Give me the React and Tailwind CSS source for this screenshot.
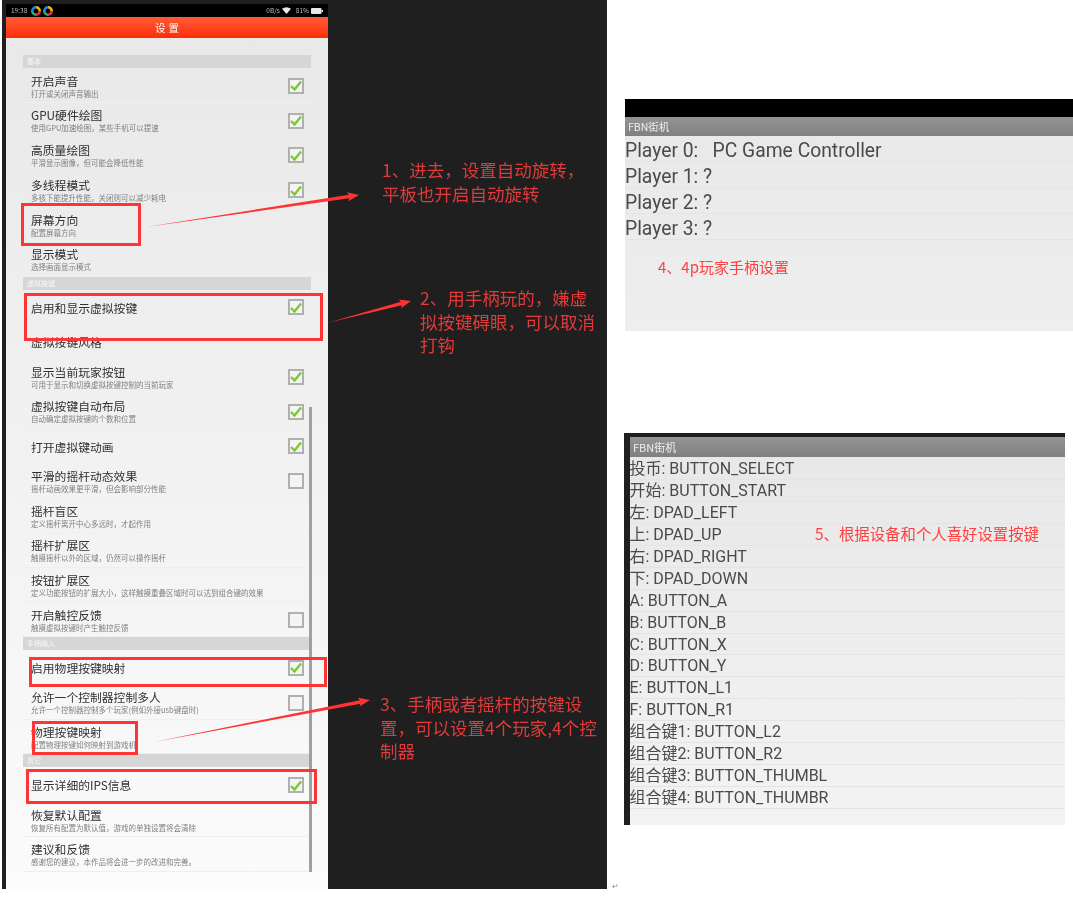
import React from 'react';

const sections = [
  {
    title: '基本',
    rows: [
      { title: '开启声音', sub: '打开或关闭声音输出', check: true },
      { title: 'GPU硬件绘图', sub: '使用GPU加速绘图，某些手机可以提速', check: true },
      { title: '高质量绘图', sub: '平滑显示图像，但可能会降低性能', check: true },
      { title: '多线程模式', sub: '多核下能提升性能，关闭则可以减少耗电', check: true },
      { title: '屏幕方向', sub: '配置屏幕方向' },
      { title: '显示模式', sub: '选择画面显示模式' },
    ],
  },
  {
    title: '虚拟按键',
    rows: [
      { title: '启用和显示虚拟按键', check: true },
      { title: '虚拟按键风格' },
      { title: '显示当前玩家按钮', sub: '可用于显示和切换虚拟按键控制的当前玩家', check: true },
      { title: '虚拟按键自动布局', sub: '自动确定虚拟按键的个数和位置', check: true },
      { title: '打开虚拟键动画', check: true },
      { title: '平滑的摇杆动态效果', sub: '摇杆动画效果更平滑，但会影响部分性能', check: false },
      { title: '摇杆盲区', sub: '定义摇杆离开中心多远时，才起作用' },
      { title: '摇杆扩展区', sub: '触摸摇杆以外的区域，仍然可以操作摇杆' },
      { title: '按钮扩展区', sub: '定义功能按钮的扩展大小，这样触摸重叠区域时可以达到组合键的效果' },
      { title: '开启触控反馈', sub: '触摸虚拟按键时产生触控反馈', check: false },
    ],
  },
  {
    title: '手柄输入',
    rows: [
      { title: '启用物理按键映射', check: true },
      { title: '允许一个控制器控制多人', sub: '允许一个控制器控制多个玩家(例如外接usb键盘时)', check: false },
      { title: '物理按键映射', sub: '配置物理按键如何映射到游戏机' },
    ],
  },
  {
    title: '其它',
    rows: [
      { title: '显示详细的IPS信息', check: true },
      { title: '恢复默认配置', sub: '恢复所有配置为默认值，游戏的单独设置将会清除' },
      { title: '建议和反馈', sub: '感谢您的建议，本作品将会进一步的改进和完善。' },
    ],
  },
];

const players = ['Player 0:   PC Game Controller', 'Player 1: ?', 'Player 2: ?', 'Player 3: ?'];

const mappings = [
  '投币: BUTTON_SELECT',
  '开始: BUTTON_START',
  '左: DPAD_LEFT',
  '上: DPAD_UP',
  '右: DPAD_RIGHT',
  '下: DPAD_DOWN',
  'A: BUTTON_A',
  'B: BUTTON_B',
  'C: BUTTON_X',
  'D: BUTTON_Y',
  'E: BUTTON_L1',
  'F: BUTTON_R1',
  '组合键1: BUTTON_L2',
  '组合键2: BUTTON_R2',
  '组合键3: BUTTON_THUMBL',
  '组合键4: BUTTON_THUMBR',
];

const font = { fontFamily: '"Noto Sans CJK SC", sans-serif' };

const Checkbox = ({ checked }) => (
  <div className="w-[16px] h-[16px] mt-[2px] shrink-0 border-2 border-[#b0b0b0] bg-[#f4f4f4] flex items-center justify-center">
    {checked && (
      <svg width="12" height="11" viewBox="0 0 12 11">
        <path d="M1 6 L4.5 9.5 L11 1.5" fill="none" stroke="#7cc832" strokeWidth="2.4" />
      </svg>
    )}
  </div>
);

const Row = ({ title, sub, check }) => (
  <div className="h-[34.75px] flex items-center justify-between pl-[8px] pr-[7px] border-b border-[#efefef]">
    <div className="flex flex-col min-w-0 pt-[2.5px]">
      <span className="text-[11.8px] leading-[14px] text-[#303030] whitespace-nowrap">{title}</span>
      {sub && <span className="text-[7.5px] leading-[10px] mt-px text-[#808080] whitespace-nowrap">{sub}</span>}
    </div>
    {check !== undefined && <Checkbox checked={check} />}
  </div>
);

const Ring = () => (
  <svg width="10" height="10" viewBox="0 0 10 10" fill="none" strokeWidth="2.6">
    <path d="M5 1.3 A3.7 3.7 0 0 1 8.7 5" stroke="#f5b800" />
    <path d="M8.7 5 A3.7 3.7 0 0 1 5 8.7" stroke="#e0304a" />
    <path d="M5 8.7 A3.7 3.7 0 0 1 1.3 5" stroke="#21b36b" />
    <path d="M1.3 5 A3.7 3.7 0 0 1 5 1.3" stroke="#1e88e5" />
  </svg>
);

const StatusBar = () => (
  <div className="h-[13px] bg-black flex items-center justify-between pl-[4px] pr-[5px] text-[6.5px] text-[#bdbdbd]">
    <div className="flex items-center">
      <span className="mr-[4px] ml-[1px]">19:38</span>
      <Ring />
      <span className="w-[2px]" />
      <Ring />
    </div>
    <div className="flex items-center">
      <span>0B/s</span>
      <svg className="mx-[2px]" width="9" height="7" viewBox="0 0 9 7">
        <path d="M0 1.8 Q4.5 -1.2 9 1.8 L4.5 7 Z" fill="#e8e8e8" />
      </svg>
      <span className="ml-[3px]">81%</span>
      <svg className="ml-[2px]" width="12" height="6" viewBox="0 0 12 6">
        <rect x="0" y="0" width="10.5" height="6" rx="1" fill="#e8e8e8" />
        <rect x="10.5" y="2" width="1.5" height="2" fill="#e8e8e8" />
      </svg>
    </div>
  </div>
);

const Phone = () => (
  <div className="relative w-[322px] h-[885px] bg-linear-to-b from-[#e8e8e8] to-[#fbfbfb] overflow-hidden">
    <StatusBar />
    <div className="h-[21px] pl-[3px] bg-linear-to-b from-[#ff5a33] to-[#ff2a00] flex items-center justify-center text-white text-[10.5px] tracking-[3px]">
      设置
    </div>
    <div className="mt-[17px] ml-[17px] w-[288px]">
      {sections.map((section) => (
        <div key={section.title}>
          <div className="h-[13px] bg-[#d6d6d6] pl-[4px] text-[7px] leading-[13px] text-[#f8f8f8]">{section.title}</div>
          {section.rows.map((row) => (
            <Row key={row.title} {...row} />
          ))}
        </div>
      ))}
    </div>
    {/* scrollbar */}
    <div className="absolute left-[303px] top-[403px] w-[3px] h-[465px] bg-[#a0a0a0]" />
  </div>
);

const AppBar = ({ className }) => (
  <div className={`bg-linear-to-b from-[#949494] to-[#808080] text-[#efefef] flex items-center ${className}`}>
    FBN街机
  </div>
);

const Arrow = ({ x1, y1, x2, y2 }) => {
  // tapered shaft that ends in a small head, same shape as the annotation tool
  const dx = x2 - x1;
  const dy = y2 - y1;
  const len = Math.hypot(dx, dy);
  const ux = dx / len;
  const uy = dy / len;
  const nx = -uy;
  const ny = ux;
  const bx = x2 - ux * 10;
  const by = y2 - uy * 10;
  const pts = [
    [x1, y1],
    [bx + nx * 1.8, by + ny * 1.8],
    [bx + nx * 4.5 - ux * 1.5, by + ny * 4.5 - uy * 1.5],
    [x2, y2],
    [bx - nx * 4.5 - ux * 1.5, by - ny * 4.5 - uy * 1.5],
    [bx - nx * 1.8, by - ny * 1.8],
  ];
  return <polygon points={pts.map((p) => p.join(',')).join(' ')} fill="#ff3333" />;
};

export default function App() {
  return (
    <div className="relative w-[1073px] h-[923px] bg-white overflow-hidden flex blur-[0.4px]" style={font}>
      <div className="w-[605px] h-[889px] ml-[2px] pt-[4px] pl-[4px] bg-[#1f1f1f]">
        <Phone />
      </div>

      <div className="flex-1 ml-[18px] flex flex-col">
        <div className="relative mt-[99px] h-[232px] bg-linear-to-b from-[#e8e8e8] to-[#eeeeee]">
          <div className="h-[18px] bg-black" />
          <AppBar className="h-[19px] pl-[3px] text-[10.5px]" />
          {players.map((p) => (
            <div
              key={p}
              className="h-[26px] border-b border-[#e4e4e4] pt-[2px] text-[19.3px] leading-[25px] text-[#4a4a4a] whitespace-pre"
              style={{ fontFamily: 'Roboto, sans-serif' }}
            >
              {p}
            </div>
          ))}
          <div className="absolute left-[33px] top-[158px] text-[15px] leading-[20px] text-[#ff4040]">4、4p玩家手柄设置</div>
        </div>

        <div className="relative mt-[102px] -ml-px w-[441px] h-[392px] bg-[#1f1f1f] pl-[6px] pt-[4px]">
          <AppBar className="h-[20px] pl-[3px] text-[11px]" />
          <div className="h-[368px] bg-linear-to-b from-[#e8e8e8] to-[#f3f3f3] pt-px">
            {mappings.map((m) => (
              <div
                key={m}
                className="h-[21.95px] border-b border-[#e4e4e4] -indent-[0.5px] text-[16px] leading-[22px] text-[#4a4a4a] whitespace-nowrap"
                style={{ fontFamily: 'Roboto, "Noto Sans CJK SC", sans-serif' }}
              >
                {m}
              </div>
            ))}
          </div>
          <div className="absolute left-[191px] top-[89px] text-[15.4px] leading-[22px] text-[#ff4040]">5、根据设备和个人喜好设置按键</div>
        </div>
      </div>

      {/* red highlight boxes over the settings list */}
      <div className="absolute left-[21px] top-[203px] w-[120px] h-[43px] border-[3.5px] border-[#ff3535]" />
      <div className="absolute left-[24px] top-[293px] w-[299px] h-[48px] border-[3.5px] border-[#ff3535]" />
      <div className="absolute left-[29px] top-[657px] w-[298px] h-[30px] border-[3.5px] border-[#ff3535]" />
      <div className="absolute left-[32px] top-[721px] w-[106px] h-[34px] border-[3.5px] border-[#ff3535]" />
      <div className="absolute left-[26px] top-[769px] w-[291px] h-[35px] border-[3.5px] border-[#ff3535]" />

      <svg className="absolute left-0 top-0" width="1073" height="923">
        <Arrow x1={146} y1={227} x2={359} y2={195} />
        <Arrow x1={327} y1={323} x2={411} y2={301} />
        <Arrow x1={154} y1={742} x2={370} y2={700} />
      </svg>

      {/* annotation notes on the dark panel */}
      <div className="absolute left-[382px] top-[158px] text-[17.5px] leading-[24px] text-[#e03a3a] whitespace-nowrap">
        1、进去，设置自动旋转，<br />平板也开启自动旋转
      </div>
      <div className="absolute left-[420px] top-[286px] text-[17.5px] leading-[23.5px] text-[#e03a3a] whitespace-nowrap">
        2、用手柄玩的，嫌虚<br />拟按键碍眼，可以取消<br />打钩
      </div>
      <div className="absolute left-[380px] top-[692px] text-[17.5px] leading-[23.7px] text-[#e03a3a] whitespace-nowrap">
        3、手柄或者摇杆的按键设<br />置，可以设置4个玩家,4个控<br />制器
      </div>
      <span className="absolute left-[612px] top-[880px] text-[8px] text-[#888]">↵</span>
    </div>
  );
}
